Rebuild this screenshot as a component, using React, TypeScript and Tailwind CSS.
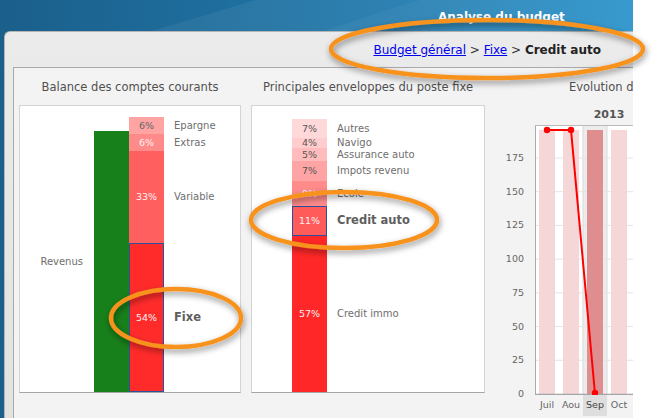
import React from 'react';

type Segment = {
  pct: string;
  label: string;
  h: string;
  bg: string;
  txt: string;
  active?: boolean;
};

const balance: Segment[] = [
  { pct: '6%', label: 'Epargne', h: 'h-[17px]', bg: 'bg-[#ffa3a3]', txt: 'text-[#666]' },
  { pct: '6%', label: 'Extras', h: 'h-[17px]', bg: 'bg-[#ff8a8a]', txt: 'text-[#fff1f1]' },
  { pct: '33%', label: 'Variable', h: 'h-[92px]', bg: 'bg-[#ff5f5f]', txt: 'text-[#fff1f1]' },
  { pct: '54%', label: 'Fixe', h: 'h-[149px]', bg: 'bg-[#ff2b2b]', txt: 'text-[#fff1f1]', active: true },
];

const enveloppes: Segment[] = [
  { pct: '7%', label: 'Autres', h: 'h-[19px]', bg: 'bg-[#ffd9d9]', txt: 'text-[#555]' },
  { pct: '4%', label: 'Navigo', h: 'h-[10px]', bg: 'bg-[#ffcdcd]', txt: 'text-[#555]' },
  { pct: '5%', label: 'Assurance auto', h: 'h-[13px]', bg: 'bg-[#ffbcbc]', txt: 'text-[#555]' },
  { pct: '7%', label: 'Impots revenu', h: 'h-[20px]', bg: 'bg-[#ffa4a4]', txt: 'text-[#555]' },
  { pct: '9%', label: 'Ecole', h: 'h-[25px]', bg: 'bg-[#ff8b8b]', txt: 'text-[#fff1f1]' },
  { pct: '11%', label: 'Credit auto', h: 'h-[30px]', bg: 'bg-[#ff5b5b]', txt: 'text-[#fff1f1]', active: true },
  { pct: '57%', label: 'Credit immo', h: 'h-[156px]', bg: 'bg-[#ff2727]', txt: 'text-[#fff1f1]' },
];

function Stack({ items }: { items: Segment[] }) {
  return (
    <div className="flex flex-col">
      {items.map((s) => (
        <div key={s.label} className={`flex ${s.h}`}>
          <div
            className={`w-[35px] shrink-0 ${s.bg} ${s.txt} flex items-center justify-center text-[9.5px] leading-none ${
              s.active ? 'border-[1.5px] border-[#2c4f9e]' : ''
            }`}
          >
            {s.pct}
          </div>
          <div
            className={`pl-[10px] flex items-center whitespace-nowrap leading-none ${
              s.active ? 'font-bold text-[11.5px] text-[#5e5e5e]' : 'text-[10px] text-[#6e6e6e]'
            }`}
          >
            {s.label}
          </div>
        </div>
      ))}
    </div>
  );
}

const yTicks = ['175', '150', '125', '100', '75', '50', '25', '0'];
const months = ['Juil', 'Aou', 'Sep', 'Oct'];

function EvolutionChart() {
  const y = (v: number) => 269 - v * 1.3486;
  return (
    <div className="flex flex-col">
      <div className="h-[20px] ml-[50px] w-[148px] flex items-center justify-center text-[11px] font-bold text-[#555]">
        2013
      </div>
      <div className="flex items-start">
        <div className="w-[50px] h-[270px] pt-[16px] pr-[11px] flex flex-col text-[9.5px] text-[#666]">
          {yTicks.map((t) => (
            <div key={t} className="h-[33.7px] shrink-0 flex items-center justify-end leading-none">
              {t}
            </div>
          ))}
        </div>
        <svg width="98" height="270" className="shrink-0 bg-white">
          <rect x="48" y="0" width="24" height="270" fill="#ececec" stroke="#dadada" />
          {[25, 50, 75, 100, 125, 150, 175].map((v) => (
            <line key={v} x1="0" x2="98" y1={y(v)} y2={y(v)} stroke="#e4e4e4" />
          ))}
          {[4, 28, 52, 76].map((x, i) => (
            <rect key={x} x={x} y="5" width="16" height="264" fill={i === 2 ? '#df8e90' : '#f5d7d8'} />
          ))}
          <line x1="0.5" x2="0.5" y1="0" y2="270" stroke="#aaa" />
          <line x1="0" x2="98" y1="0.5" y2="0.5" stroke="#bbb" />
          <line x1="0" x2="98" y1="269.5" y2="269.5" stroke="#a5a5a5" strokeWidth="1.5" />
          <polyline points="12,5 36,5 60,269" fill="none" stroke="#ff0000" strokeWidth="2" />
          <circle cx="12" cy="5" r="3.2" fill="#ff0000" />
          <circle cx="36" cy="5" r="3.2" fill="#ff0000" />
          <circle cx="60" cy="268" r="3.2" fill="#ff0000" />
        </svg>
      </div>
      <div className="flex ml-[50px]">
        {months.map((m) => (
          <div
            key={m}
            className={`w-[24px] h-[21px] shrink-0 flex items-center justify-center text-[9.5px] ${
              m === 'Sep' ? 'bg-[#dedede] text-[#444]' : 'text-[#666]'
            }`}
          >
            {m}
          </div>
        ))}
      </div>
    </div>
  );
}

export default function App() {
  return (
    <div className="relative w-[653px] h-[418px] bg-white overflow-hidden font-['DejaVu_Sans',sans-serif]">
      <div className="w-[633px] h-full overflow-hidden flex flex-col bg-gradient-to-r from-[#1b5f8b] via-[#1f74a6] to-[#2390c9] relative">
        <svg className="absolute left-0 top-0" width="633" height="40">
          <path d="M120 40 Q190 20 255 0 L633 0 L633 40 Z" fill="#ffffff" opacity="0.06" />
          <path d="M300 40 Q360 18 420 0 L633 0 L633 40 Z" fill="#ffffff" opacity="0.04" />
        </svg>
        <div className="relative h-[31px] shrink-0 flex items-center pl-[438px] pt-[3px] text-[12px] font-bold text-white leading-none">
          Analyse du budget
        </div>
        <div className="relative flex-1 ml-[4px] rounded-tl-[6px] border-t border-l border-[#b4b4b4] bg-gradient-to-b from-[#ebebeb] to-[#e2e2e2] flex flex-col">
          <div className="h-[35px] shrink-0 flex items-center justify-end pr-[32px] text-[12px] text-[#333] whitespace-nowrap">
            <a href="#" className="text-[#0000ee] underline">Budget général</a>
            <span>&nbsp;&gt;&nbsp;</span>
            <a href="#" className="text-[#0000ee] underline">Fixe</a>
            <span>&nbsp;&gt;&nbsp;</span>
            <span className="font-bold text-[#222]">Credit auto</span>
          </div>
          <div className="flex-1 ml-[8px] border-t border-l border-[#a9a9a9] bg-[#f3f3f3] flex items-start">
            <div className="ml-[5px] flex flex-col shrink-0">
              <div className="h-[37px] pt-[3px] flex items-center justify-center text-[11.5px] text-[#505050] whitespace-nowrap">
                Balance des comptes courants
              </div>
              <div className="w-[222px] h-[288px] bg-white border border-[#d4d4d4] border-b-[#a6a6a6] flex items-end">
                <div className="flex items-center h-[261px]">
                  <span className="w-[74px] text-right pr-[11px] text-[10px] text-[#6e6e6e]">Revenus</span>
                  <div className="w-[35px] h-full bg-[#18801a]" />
                </div>
                <Stack items={balance} />
              </div>
            </div>
            <div className="ml-[10px] flex flex-col shrink-0">
              <div className="h-[37px] pt-[3px] flex items-center justify-center text-[11.5px] text-[#505050] whitespace-nowrap">
                Principales enveloppes du poste fixe
              </div>
              <div className="w-[234px] h-[288px] bg-white border border-[#d4d4d4] border-b-[#a6a6a6] flex items-end pl-[40px]">
                <Stack items={enveloppes} />
              </div>
            </div>
            <div className="flex flex-col shrink-0">
              <div className="h-[37px] pt-[3px] pl-[84px] flex items-center text-[11.5px] text-[#505050] whitespace-nowrap">
                Evolution des dépenses
              </div>
              <EvolutionChart />
            </div>
          </div>
        </div>
      </div>
      <svg className="absolute left-0 top-0 pointer-events-none" width="653" height="418">
        <defs>
          <filter id="shadow" x="-20%" y="-40%" width="140%" height="180%">
            <feDropShadow dx="1" dy="3" stdDeviation="3" floodColor="#000" floodOpacity="0.45" />
          </filter>
        </defs>
        <g fill="none" stroke="#f7921f" strokeWidth="4.5" filter="url(#shadow)">
          <ellipse cx="487" cy="49" rx="156" ry="29" />
          <ellipse cx="344" cy="220" rx="93" ry="28" />
          <ellipse cx="176" cy="318" rx="65" ry="29" />
        </g>
      </svg>
    </div>
  );
}
